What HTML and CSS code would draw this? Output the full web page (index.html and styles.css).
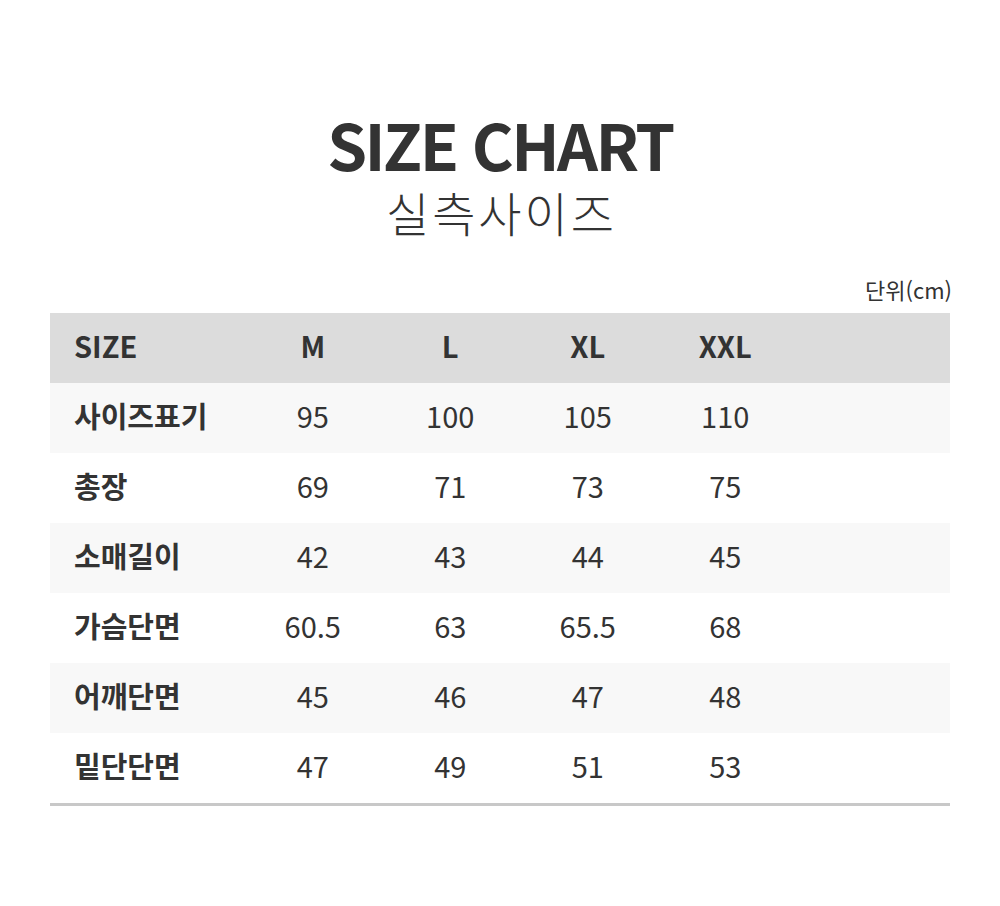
FILE: index.html
```html
<!DOCTYPE html>
<html lang="ko">
<head>
<meta charset="utf-8">
<title>SIZE CHART</title>
<link rel="stylesheet" href="styles.css">
</head>
<body>
<main class="page">
  <header class="heading">
    <h1 class="title">SIZE CHART</h1>
    <p class="subtitle">실측사이즈</p>
  </header>
  <p class="unit">단위(cm)</p>
  <div class="chart">
    <div class="row head">
      <div class="cell label">SIZE</div>
      <div class="cell">M</div>
      <div class="cell">L</div>
      <div class="cell">XL</div>
      <div class="cell">XXL</div>
      <div class="cell"></div>
    </div>
    <div class="row shade">
      <div class="cell label">사이즈표기</div>
      <div class="cell">95</div>
      <div class="cell">100</div>
      <div class="cell">105</div>
      <div class="cell">110</div>
      <div class="cell"></div>
    </div>
    <div class="row">
      <div class="cell label">총장</div>
      <div class="cell">69</div>
      <div class="cell">71</div>
      <div class="cell">73</div>
      <div class="cell">75</div>
      <div class="cell"></div>
    </div>
    <div class="row shade">
      <div class="cell label">소매길이</div>
      <div class="cell">42</div>
      <div class="cell">43</div>
      <div class="cell">44</div>
      <div class="cell">45</div>
      <div class="cell"></div>
    </div>
    <div class="row">
      <div class="cell label">가슴단면</div>
      <div class="cell">60.5</div>
      <div class="cell">63</div>
      <div class="cell">65.5</div>
      <div class="cell">68</div>
      <div class="cell"></div>
    </div>
    <div class="row shade">
      <div class="cell label">어깨단면</div>
      <div class="cell">45</div>
      <div class="cell">46</div>
      <div class="cell">47</div>
      <div class="cell">48</div>
      <div class="cell"></div>
    </div>
    <div class="row">
      <div class="cell label">밑단단면</div>
      <div class="cell">47</div>
      <div class="cell">49</div>
      <div class="cell">51</div>
      <div class="cell">53</div>
      <div class="cell"></div>
    </div>
  </div>
</main>
</body>
</html>
```
FILE: styles.css
```css
* { box-sizing: border-box; }
html, body { margin: 0; padding: 0; background: #ffffff; }
body {
  font-family: "Noto Sans CJK KR", "Noto Sans", sans-serif;
  color: #333333;
}
.page {
  width: 900px;
  margin: 0 auto;
  padding-top: 111px;
}
.heading {
  text-align: center;
}
.title {
  margin: 0;
  font-size: 64px;
  font-weight: 700;
  line-height: 64px;
  letter-spacing: -2.6px;
}
.subtitle {
  margin: 12px 0 0;
  font-size: 47px;
  font-weight: 300;
  line-height: 50px;
  letter-spacing: 3px;
  padding-left: 3px;
}
.unit {
  margin: 37px -2px 0 0;
  text-align: right;
  font-size: 22px;
  line-height: 30px;
}
.chart {
  margin-top: 9px;
  border-bottom: 3px solid #c8c8c8;
}
.row {
  display: grid;
  grid-template-columns: 194px repeat(4, 137.5px) 1fr;
  height: 70px;
  align-items: center;
}
.row.head { background: #dcdcdc; }
.row.shade { background: #f8f8f8; }
.cell {
  text-align: center;
  font-size: 29px;
  line-height: 40px;
  padding-bottom: 6px;
}
.head .cell { font-weight: 700; }
.cell.label {
  text-align: left;
  padding-left: 24px;
  font-weight: 700;
}
```
